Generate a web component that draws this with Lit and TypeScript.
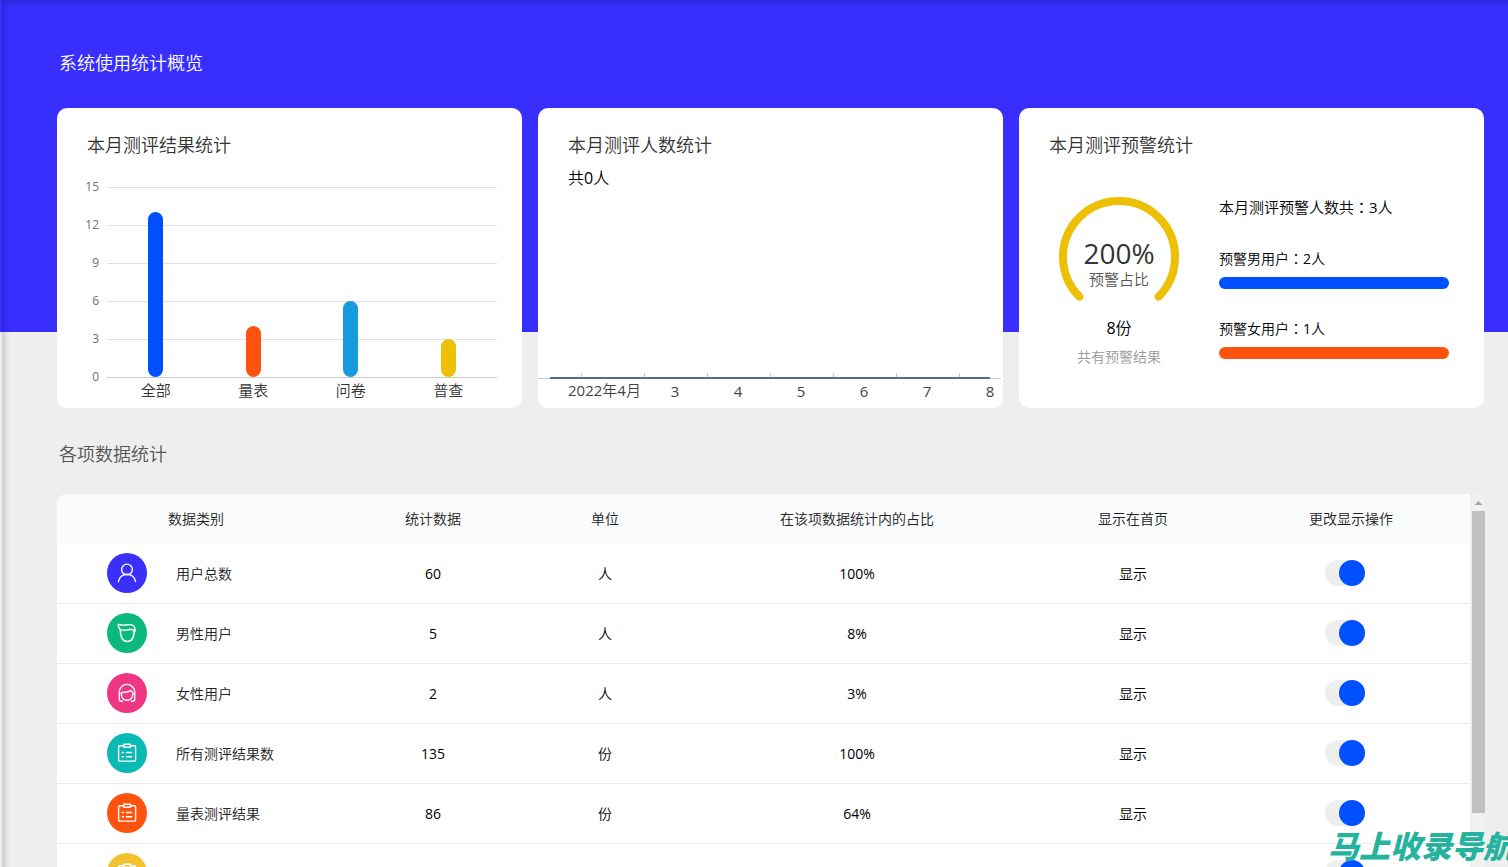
import { LitElement, html, svg, css } from "lit";
import { customElement, property } from "lit/decorators.js";

const BARS = [
  { label: "全部", value: 13, color: "#0050ff" },
  { label: "量表", value: 4, color: "#ff530d" },
  { label: "问卷", value: 6, color: "#179be0" },
  { label: "普查", value: 3, color: "#edbf05" },
];
const BAR_MAX = 15;
const BAR_TICKS = [15, 12, 9, 6, 3, 0];

const DAYS = ["3", "4", "5", "6", "7", "8"];

const ROWS = [
  { icon: "user", color: "#3a30fa", name: "用户总数", count: "60", unit: "人", share: "100%" },
  { icon: "male", color: "#0bb97f", name: "男性用户", count: "5", unit: "人", share: "8%" },
  { icon: "female", color: "#ee3683", name: "女性用户", count: "2", unit: "人", share: "3%" },
  { icon: "form", color: "#08b9b5", name: "所有测评结果数", count: "135", unit: "份", share: "100%" },
  { icon: "form", color: "#ff530d", name: "量表测评结果", count: "86", unit: "份", share: "64%" },
  { icon: "form", color: "#f2c230", name: "", count: "", unit: "", share: "" },
];

const GLYPHS: Record<string, unknown> = {
  user: svg`<circle cx="20" cy="16.500" r="5.400"/><path d="M11.400 28.600a8.700 8.700 0 0 1 17.200 0"/>`,
  male: svg`<path d="M13.300 16.500c0 7 2 12 7 12s7-5 7-12"/><path d="M11.300 11.300q5 1.400 9.500.4 7.800-.8 7.400 5.800M11.300 11.300q0 5 3 5.600 5 1 8.500-.6 3 0 5 2.400"/>`,
  female: svg`<path d="M15.500 28.300h-1.500q-1.700 0-1.700-1.700v-7.500a7.700 7.700 0 0 1 15.400 0v7.500q0 1.700-1.700 1.700h-1.500"/><path d="M14.300 19.500q6 .3 9.500-1.800l2 1.500v2q-.5 6-5.800 6t-5.700-6z"/>`,
  form: svg`<path d="M16.500 12.700h-3.700q-1.200 0-1.200 1.200v13q0 1.200 1.200 1.200h14.600q1.200 0 1.200-1.200v-13q0-1.200-1.200-1.200h-3.700"/><path d="M16.800 11.300h6.600v3h-6.600zM15.200 19.500h1.200M19.400 19.500h5.200M15.200 23.700h1.200M19.400 23.700h5.200"/>`,
};

const baseText = css`
  :host {
    display: block;
    box-sizing: border-box;
    font-family: "Open Sans", "Noto Sans CJK SC DemiLight", "Noto Sans CJK SC", sans-serif;
    font-weight: 400;
    color: #000;
  }
  * {
    box-sizing: border-box;
  }
`;

@customElement("stat-card")
class StatCard extends LitElement {
  @property() heading = "";

  static styles = [
    baseText,
    css`
      :host {
        display: flex;
        flex-direction: column;
        min-height: 300px;
        border-radius: 10px;
        background: #fff;
      }
      .title {
        margin: 0;
        padding: 23px 30px 1px;
        font-size: 18px;
        line-height: 28px;
        font-weight: inherit;
        color: #333;
      }
    `,
  ];

  render() {
    return html`<h2 class="title">${this.heading}</h2><slot></slot>`;
  }
}

@customElement("bar-chart")
class BarChart extends LitElement {
  static styles = [
    baseText,
    css`
      :host {
        padding: 8px 25px 0 22px;
      }
      .chart {
        display: grid;
        grid-template-columns: 20px 1fr;
        column-gap: 8px;
      }
      .scale {
        display: flex;
        flex-direction: column;
        font-size: 12px;
        line-height: 38px;
        text-align: right;
        color: #6e7079;
      }
      .plot {
        display: grid;
        padding-top: 19px;
      }
      .lines,
      .bars {
        grid-area: 1 / 1;
        height: 190px;
      }
      .line {
        height: 38px;
        border-top: 1px solid #e0e0e6;
      }
      .lines {
        border-bottom: 1px solid #ccc;
        height: 191px;
      }
      .bars {
        display: flex;
        align-items: flex-end;
        justify-content: space-around;
      }
      .bar {
        width: 15px;
        border-radius: 8px;
      }
      .names {
        grid-column: 2;
        display: flex;
        margin-top: -18px;
        font-size: 15px;
        line-height: 24px;
        color: #333;
      }
      .name {
        flex: 1;
        text-align: center;
      }
    `,
  ];

  render() {
    return html`<div class="chart">
      <div class="scale">${BAR_TICKS.map((t) => html`<span>${t}</span>`)}</div>
      <div class="plot">
        <div class="lines">${BAR_TICKS.slice(1).map(() => html`<div class="line"></div>`)}</div>
        <div class="bars">
          ${BARS.map(
            (b) => html`<div class="bar" style="height:${(b.value / BAR_MAX) * 100}%;background:${b.color}"></div>`
          )}
        </div>
      </div>
      <div class="names">${BARS.map((b) => html`<span class="name">${b.label}</span>`)}</div>
    </div>`;
  }
}

@customElement("day-chart")
class DayChart extends LitElement {
  static styles = [
    baseText,
    css`
      :host {
        display: flex;
        flex: 1;
        flex-direction: column;
        justify-content: space-between;
      }
      .total {
        margin: 0;
        padding: 4px 30px 0;
        font-size: 16px;
        line-height: 28px;
      }
      .axis {
        display: block;
        width: 100%;
        height: 36px;
      }
      .base {
        stroke: #c4c9d4;
      }
      .series {
        stroke: #4f6e96;
        stroke-width: 2;
      }
      .label {
        font-size: 15px;
        fill: #444;
        text-anchor: middle;
      }
      .month {
        text-anchor: start;
      }
    `,
  ];

  render() {
    const pct = (x: number) => `${(x / 465) * 100}%`;
    return html`<p class="total">共0人</p>
      <svg class="axis">
        <line class="base" x1="0" x2=${pct(463)} y1="6.500" y2="6.500" />
        ${[0, 1, 2, 3, 4, 5, 6].map((i) => {
          const x = pct(43.5 + 63 * i);
          return svg`<line class="base" x1=${x} x2=${x} y1="1" y2="6"/>`;
        })}
        <line class="series" x1=${pct(12)} x2=${pct(452)} y1="6" y2="6" />
        <text class="label month" x=${pct(30)} y="24">2022年4月</text>
        ${DAYS.map((d, i) => svg`<text class="label" x=${pct(137 + 63 * i)} y="25">${d}</text>`)}
      </svg>`;
  }
}

@customElement("warn-panel")
class WarnPanel extends LitElement {
  static styles = [
    baseText,
    css`
      :host {
        display: grid;
        grid-template-columns: 120px 1fr;
        column-gap: 40px;
        padding: 37px 35px 0 40px;
      }
      .left {
        text-align: center;
      }
      .gauge {
        display: grid;
        justify-items: center;
        height: 120px;
      }
      .ring,
      .center {
        grid-area: 1 / 1;
      }
      .ring {
        width: 120px;
        height: 120px;
      }
      .center {
        padding-top: 40px;
      }
      .value {
        font-size: 28px;
        line-height: 32px;
        color: #333;
      }
      .caption {
        font-size: 15px;
        line-height: 20px;
        color: #555;
      }
      .count {
        font-size: 16px;
        line-height: 22px;
      }
      .note {
        padding-top: 8px;
        font-size: 14px;
        line-height: 20px;
        color: #999;
      }
      .sum {
        margin: 0;
        font-size: 15px;
        line-height: 20px;
      }
      .item {
        padding-top: 32px;
        font-size: 14px;
        line-height: 20px;
      }
      .item + .item {
        padding-top: 30px;
      }
      .meter {
        height: 12px;
        margin-top: 8px;
        border-radius: 6px;
      }
      .colon {
        font-family: "Noto Sans CJK TC", sans-serif;
        line-height: 1;
      }
    `,
  ];

  render() {
    const colon = html`<span class="colon" lang="zh-Hant">：</span>`;
    return html`<div class="left">
        <div class="gauge">
          <svg class="ring" viewBox="0 0 120 120" fill="none" stroke="#edbf05" stroke-width="8" stroke-linecap="round">
            <path d="M20.400 99.600a56 56 0 1 1 79.200 0" />
          </svg>
          <div class="center">
            <div class="value">200%</div>
            <div class="caption">预警占比</div>
          </div>
        </div>
        <div class="count">8份</div>
        <div class="note">共有预警结果</div>
      </div>
      <div class="right">
        <p class="sum">本月测评预警人数共${colon}3人</p>
        <div class="item">预警男用户${colon}2人
          <div class="meter" style="background:#0050ff"></div>
        </div>
        <div class="item">预警女用户${colon}1人
          <div class="meter" style="background:#ff530d"></div>
        </div>
      </div>`;
  }
}

@customElement("data-table")
class DataTable extends LitElement {
  static styles = [
    baseText,
    css`
      :host {
        overflow: hidden;
        border-radius: 10px 0 0 0;
        background: #fff;
      }
      .table {
        width: 100%;
        table-layout: fixed;
        border-collapse: separate;
        border-spacing: 0;
        font-size: 14px;
        line-height: 20px;
        text-align: center;
      }
      .c1 { width: 278px; }
      .c2, .c5 { width: 196px; }
      .c3 { width: 148px; }
      .c4 { width: 356px; }
      .c6 { width: 240px; }
      th {
        height: 50px;
        padding: 0;
        font-weight: inherit;
        color: #222;
        background: #fafbfd;
      }
      td {
        height: 60px;
        padding: 0;
        border-bottom: 1px solid #ebebef;
      }
      .kind-cell {
        padding-bottom: 1px;
      }
      .switch-cell {
        padding: 0 12px 1px 0;
      }
      .kind {
        display: flex;
        align-items: center;
        gap: 29px;
        padding-left: 50px;
        color: #222;
      }
      .kind-name {
        padding-top: 2px;
      }
      .icon {
        width: 40px;
        height: 40px;
        border-radius: 50%;
      }
      .switch {
        appearance: none;
        display: block;
        width: 40px;
        height: 26px;
        margin: 0 auto;
        border-radius: 13px;
        background: #eee;
      }
      .switch::before {
        content: "";
        display: block;
        width: 26px;
        height: 26px;
        border-radius: 50%;
        background: #fff;
      }
      .switch:checked::before {
        margin-left: auto;
        background: #0050ff;
      }
    `,
  ];

  render() {
    return html`<table class="table">
      <colgroup>
        ${[1, 2, 3, 4, 5, 6].map((n) => html`<col class="c${n}" />`)}
      </colgroup>
      <thead>
        <tr>
          <th>数据类别</th>
          <th>统计数据</th>
          <th>单位</th>
          <th>在该项数据统计内的占比</th>
          <th>显示在首页</th>
          <th>更改显示操作</th>
        </tr>
      </thead>
      <tbody>
        ${ROWS.map(
          (r) => html`<tr>
            <td class="kind-cell">
              <div class="kind">
                <svg class="icon" style="background:${r.color}" viewBox="0 0 40 40" fill="none" stroke="#fff" stroke-width="1.4" stroke-linecap="round" stroke-linejoin="round">${GLYPHS[r.icon]}</svg>
                <span class="kind-name">${r.name}</span>
              </div>
            </td>
            <td>${r.count}</td>
            <td>${r.unit}</td>
            <td>${r.share}</td>
            <td>${r.name ? "显示" : ""}</td>
            <td class="switch-cell"><input class="switch" type="checkbox" aria-label="${r.name}显示在首页" checked /></td>
          </tr>`
        )}
      </tbody>
    </table>`;
  }
}

@customElement("app-root")
class AppRoot extends LitElement {
  static styles = [
    baseText,
    css`
      :host {
        position: relative;
        height: 100vh;
        overflow: hidden;
        background: linear-gradient(#382fff 332px, #eee 332px);
      }
      .edge {
        position: absolute;
        inset: 0 -12px -12px 2px;
        box-shadow: inset 0 0 8px rgba(0, 0, 0, 0.3);
        pointer-events: none;
      }
      .page {
        display: flex;
        flex-direction: column;
        height: 100%;
        padding: 0 23px 0 57px;
      }
      .heading {
        flex: none;
        margin: 0;
        padding: 49px 2px 31px;
        font-size: 18px;
        line-height: 28px;
        font-weight: inherit;
        color: #fff;
      }
      .second {
        padding: 32px 2px 26px;
        color: #555;
      }
      .cards {
        flex: none;
        display: grid;
        grid-template-columns: repeat(3, 1fr);
        gap: 16px;
        padding-right: 1px;
      }
      .data {
        flex: 1;
        display: flex;
        gap: 2px;
        min-height: 0;
      }
      .data-body {
        flex: 1;
      }
      .scroll {
        display: flex;
        flex-direction: column;
        align-items: center;
        width: 13px;
        padding-top: 7px;
        background: #f1f1f1;
      }
      .arrow {
        width: 8px;
        height: 4px;
        background: #a3a3a3;
        clip-path: polygon(50% 0, 100% 100%, 0 100%);
      }
      .thumb {
        width: 100%;
        height: 302px;
        margin-top: 6px;
        background: #c1c1c1;
      }
      .mark {
        position: absolute;
        right: -6px;
        bottom: 2px;
        font-size: 31px;
        line-height: 40px;
        font-family: "Noto Sans CJK SC", sans-serif;
        font-weight: 900;
        font-style: italic;
        white-space: nowrap;
        color: #26b39e;
      }
    `,
  ];

  render() {
    return html`<main class="page">
        <h1 class="heading">系统使用统计概览</h1>
        <section class="cards">
          <stat-card heading="本月测评结果统计"><bar-chart></bar-chart></stat-card>
          <stat-card heading="本月测评人数统计"><day-chart></day-chart></stat-card>
          <stat-card heading="本月测评预警统计"><warn-panel></warn-panel></stat-card>
        </section>
        <h1 class="heading second">各项数据统计</h1>
        <section class="data">
          <data-table class="data-body"></data-table>
          <div class="scroll">
            <div class="arrow"></div>
            <div class="thumb"></div>
          </div>
        </section>
      </main>
      <div class="edge"></div>
      <div class="mark">马上收录导航</div>`;
  }
}
